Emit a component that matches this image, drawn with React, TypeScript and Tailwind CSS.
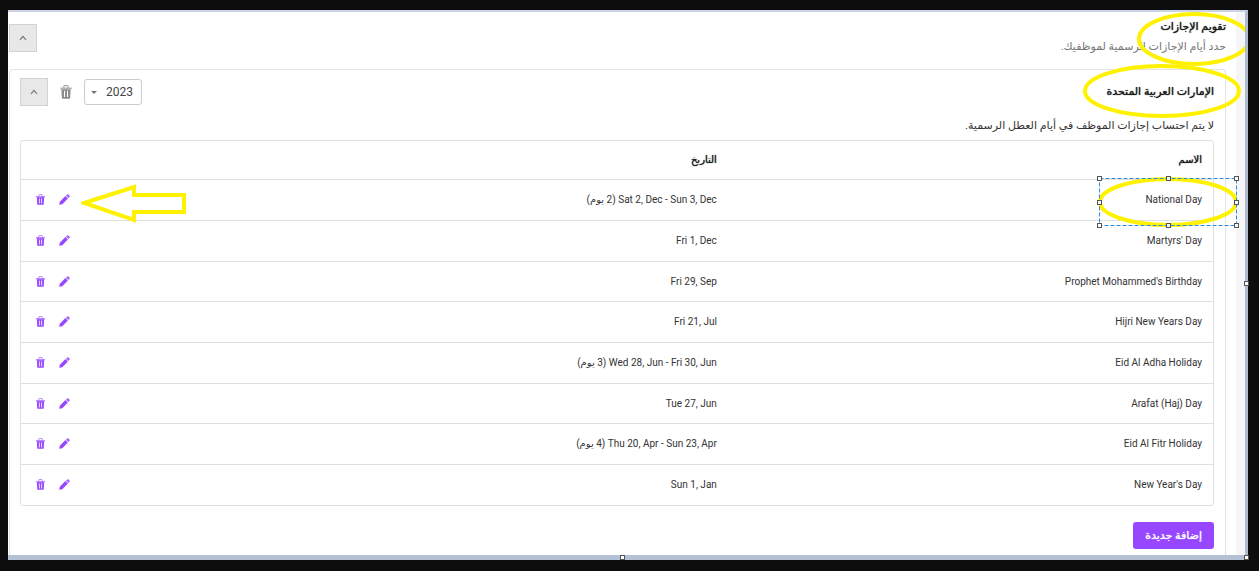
import React from "react";

type Holiday = { name: string; date: string };

const holidays: Holiday[] = [
  { name: "National Day", date: "Sat 2, Dec - Sun 3, Dec (2 يوم)" },
  { name: "Martyrs' Day", date: "Fri 1, Dec" },
  { name: "Prophet Mohammed's Birthday", date: "Fri 29, Sep" },
  { name: "Hijri New Years Day", date: "Fri 21, Jul" },
  { name: "Eid Al Adha Holiday", date: "Wed 28, Jun - Fri 30, Jun (3 يوم)" },
  { name: "Arafat (Haj) Day", date: "Tue 27, Jun" },
  { name: "Eid Al Fitr Holiday", date: "Thu 20, Apr - Sun 23, Apr (4 يوم)" },
  { name: "New Year's Day", date: "Sun 1, Jan" },
];

function TrashIcon({ className }: { className: string }) {
  return (
    <svg viewBox="0 0 12 14" className={className} aria-hidden="true">
      <path d="M3.8 2.8V1.4Q3.8.6 4.6.6H7.4Q8.2.6 8.2 1.4V2.8" fill="none" stroke="currentColor" strokeWidth="1.1" opacity=".75" />
      <rect x=".2" y="2.4" width="11.6" height="1.9" rx=".4" fill="currentColor" opacity=".65" />
      <path fillRule="evenodd" fill="currentColor" d="M1.4 4.2H10.6L10.2 12.6Q10.1 13.8 9 13.8H3Q1.9 13.8 1.8 12.6ZM4 5.8V12H5V5.8ZM7 5.8V12H8V5.8Z" />
    </svg>
  );
}

function PencilIcon({ className }: { className: string }) {
  return (
    <svg viewBox="0 0 12 12" className={className} fill="currentColor" aria-hidden="true">
      <path d="M.2 11.8L.9 8.4L7 2.3L9.7 5L3.6 11.1Z" />
      <path d="M7.6 1.8L8.9.5Q9.6 0 10.3.5L11.5 1.7Q12 2.4 11.5 3.1L10.2 4.4Z" opacity=".85" />
    </svg>
  );
}

function CollapseButton({ label }: { label: string }) {
  return (
    <button type="button" aria-label={label} className="flex size-7 items-center justify-center border border-[#d2d2d2] bg-[#e8e8e8] text-[#777]">
      <svg viewBox="0 0 8 8" className="size-2" fill="none" stroke="currentColor" strokeWidth="1.2" aria-hidden="true">
        <path d="M1 5.8L4 2.4L7 5.8" />
      </svg>
    </button>
  );
}

const selectionHandles = [
  [54, 167], [123, 167], [191, 167],
  [54, 191], [191, 191],
  [54, 214], [123, 214], [191, 214],
];

function Highlights() {
  return (
    <svg viewBox="0 0 200 220" className="pointer-events-none absolute top-0 right-0 h-[220px] w-[200px]" fill="none" aria-hidden="true">
      <g stroke="#fff200" strokeWidth="4">
        <ellipse cx="149" cy="27" rx="55" ry="25" />
        <ellipse cx="117" cy="79" rx="77" ry="25" />
        <ellipse cx="123" cy="190" rx="68" ry="23" />
      </g>
      <rect x="54.500" y="166.500" width="137" height="47" stroke="#2c88d9" strokeDasharray="4 2" />
      {selectionHandles.map(([x, y]) => (
        <rect key={`${x}-${y}`} x={x - 1.5} y={y - 2.5} width="4" height="4" fill="#fff" stroke="#555" />
      ))}
    </svg>
  );
}

function Handle() {
  return <span className="size-[5px] border border-[#555] bg-white" />;
}

export default function App() {
  return (
    <div dir="rtl" className="min-h-screen bg-[#0d0d0d] pt-[10px] pr-[11px] pb-[11px] pl-2 font-['Roboto','DejaVu_Sans',sans-serif] text-[#333]">
      <div className="relative border-t-2 border-r-[3px] border-b-[5px] border-t-[#ccd3e4] border-r-[#afbccf] border-b-[#b4c0d4] bg-white">
        <div className="border-r-[9px] border-[#f6f6f8]">
          <div className="mr-[10px] ml-px">
            <header className="flex items-start justify-between pt-[5px] pb-3">
              <div className="leading-5">
                <h1 className="text-[11px] text-[#1a1a1a] text-shadow-[0_0_1px_#1a1a1a]">تقويم الإجازات</h1>
                <p className="text-[11px] text-[#777]">حدد أيام الإجازات الرسمية لموظفيك.</p>
              </div>
              <div className="pt-[7px]">
                <CollapseButton label="طي تقويم الإجازات" />
              </div>
            </header>

            <section className="rounded-t border border-b-0 border-[#e4e4e4] pt-2 pr-[11px] pb-[6px] pl-[10px]">
              <div className="flex items-center justify-between">
                <h2 className="text-[11px] text-[#1a1a1a] text-shadow-[0_0_1px_#1a1a1a]">الإمارات العربية المتحدة</h2>
                <div className="flex items-center gap-3">
                  <div className="relative">
                    <select aria-label="السنة" defaultValue="2023" className="block h-[26px] w-[58px] appearance-none rounded-[3px] border border-[#ccc] bg-white pr-2 text-[12px] text-[#444]">
                      <option>2023</option>
                      <option>2022</option>
                    </select>
                    <span className="pointer-events-none absolute inset-y-0 left-[7px] flex items-center">
                      <span className="border-x-3 border-t-3 border-x-transparent border-t-[#777]" />
                    </span>
                  </div>
                  <button type="button" aria-label="حذف التقويم" className="text-[#8c8c8c]">
                    <TrashIcon className="h-[14px] w-3" />
                  </button>
                  <CollapseButton label="طي الإمارات العربية المتحدة" />
                </div>
              </div>

              <p className="pt-[10px] pb-1 text-[11px] leading-5">لا يتم احتساب إجازات الموظف في أيام العطل الرسمية.</p>

              <div className="rounded-[3px] border border-[#e0e0e0]">
                <table className="w-full table-fixed border-collapse text-right text-[10px]">
                  <colgroup>
                    <col className="w-[40.7%]" />
                    <col />
                    <col className="w-[120px]" />
                  </colgroup>
                  <thead className="text-[#1a1a1a] text-shadow-[0_0_1px_#1a1a1a]">
                    <tr className="h-[38px]">
                      <th scope="col" className="px-[11px] font-normal">الاسم</th>
                      <th scope="col" className="px-[11px] font-normal">التاريخ</th>
                      <td />
                    </tr>
                  </thead>
                  <tbody>
                    {holidays.map((h) => (
                      <tr key={h.name} className="h-[41px] border-t border-[#e0e0e0] nth-[3n]:h-10">
                        <td className="px-[11px]"><bdi>{h.name}</bdi></td>
                        <td className="px-[11px]">{h.date}</td>
                        <td className="pl-[14px]">
                          <div className="flex items-center justify-end gap-[13px] text-[#9747ff]">
                            <button type="button" aria-label={`تعديل ${h.name}`}><PencilIcon className="size-[11px]" /></button>
                            <button type="button" aria-label={`حذف ${h.name}`}><TrashIcon className="size-[11px]" /></button>
                          </div>
                        </td>
                      </tr>
                    ))}
                  </tbody>
                </table>
              </div>

              <button type="button" className="mt-4 block rounded-[3px] bg-[#9747ff] px-3 text-[11px] leading-[27px] text-white text-shadow-[0_0_1px_#fff]">إضافة جديدة</button>
            </section>
          </div>
        </div>

        <Highlights />
        <svg viewBox="0 0 106 40" className="pointer-events-none absolute top-[171px] left-[73px] h-10 w-[106px]" fill="none" stroke="#fff200" strokeWidth="4" aria-hidden="true">
          <path d="M3 20L53 4V12H103V29H53V37Z" />
        </svg>
        <div className="pointer-events-none absolute inset-y-0 -right-1 flex items-center">
          <Handle />
        </div>
        <div className="pointer-events-none absolute -right-1 -bottom-[5px] -left-3 grid grid-cols-[1fr_auto_1fr] items-end">
          <span className="flex"><Handle /></span>
          <Handle />
        </div>
      </div>
    </div>
  );
}
